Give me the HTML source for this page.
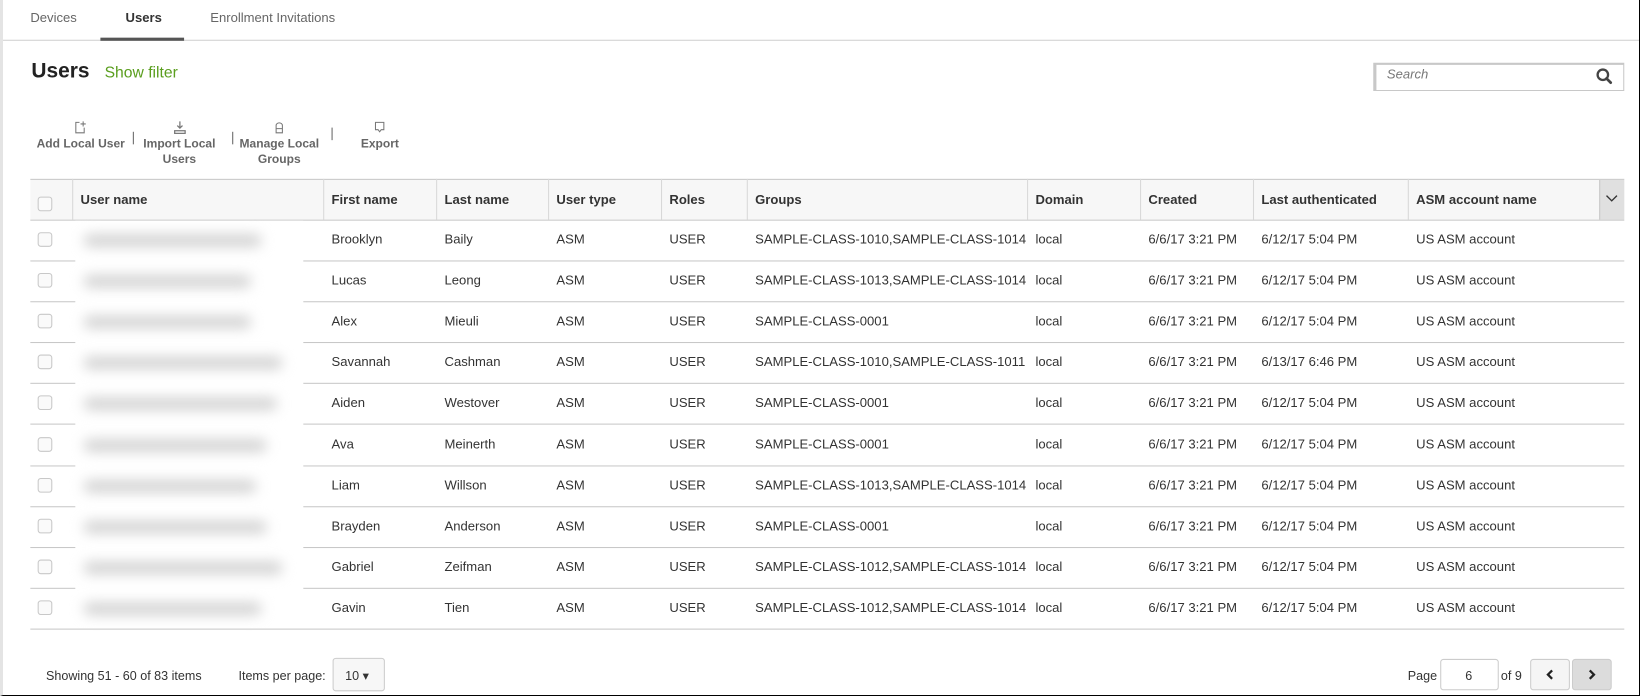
<!DOCTYPE html>
<html><head><meta charset="utf-8"><style>
*{box-sizing:border-box;margin:0;padding:0}
body{width:1640px;height:696px;background:#fff;font-family:"Liberation Sans",sans-serif;color:#333;position:relative;overflow:hidden;font-size:12px}
#w{position:absolute;left:0;top:0;width:1568px;height:666px;transform:scale(1.0459);transform-origin:0 0}
.a{position:absolute;white-space:nowrap}
.frame{position:absolute;left:0;top:0;width:1640px;height:696px;border:1px solid #000;border-left:3px solid #e4e4e4;border-top:none;pointer-events:none}
.tab{top:10px;font-size:12.5px;color:#666}
.tb{font-size:11.5px;font-weight:bold;color:#666;text-align:center;line-height:15px}
.sep{width:1px;height:12px;background:#666}
.hl{position:absolute;left:29px;width:1524px;height:1px;background:#c8c8c8}
.cb{position:absolute;left:36px;width:14px;height:14px;border:1px solid #c8c8c8;border-radius:3px;background:#fafafa}
.th{font-weight:bold;font-size:12.5px;color:#333;top:184px}
.vl{position:absolute;top:171px;width:1px;height:39px;background:#d8d8d8}
.cell{font-size:12.5px;color:#333}
.blur{position:absolute;left:80px;height:12px;background:#d2d2d2;filter:blur(6px);border-radius:6px}
</style></head><body>
<div id="w">
<div class="a tab" style="left:29px">Devices</div>
<div class="a tab" style="left:120px;color:#333;font-weight:bold">Users</div>
<div class="a tab" style="left:201px">Enrollment Invitations</div>
<div style="position:absolute;left:0;top:38px;width:1568px;height:1px;background:#d0d0d0"></div>
<div style="position:absolute;left:96px;top:36px;width:80px;height:3px;background:#555"></div>

<div class="a" style="left:30px;top:57px;font-size:20px;font-weight:bold;color:#222">Users</div>
<div class="a" style="left:100px;top:61px;font-size:15px;color:#5a9e1e">Show filter</div>

<div style="position:absolute;left:1313px;top:60px;width:240px;height:27px;border:1px solid #c8c8c8;border-left-width:3px;border-top-width:2px"></div>
<div class="a" style="left:1326px;top:64px;font-size:12.5px;font-style:italic;color:#777">Search</div>
<svg class="a" style="left:1525px;top:64px" width="18" height="18" viewBox="0 0 18 18"><circle cx="7.5" cy="7.5" r="5" fill="none" stroke="#444" stroke-width="2.2"/><line x1="11" y1="11" x2="15" y2="15" stroke="#444" stroke-width="2.6" stroke-linecap="round"/></svg>

<svg class="a" style="left:70px;top:115px" width="14" height="14" viewBox="0 0 14 14" fill="none" stroke="#777" stroke-width="1"><path d="M6 2H2.5v10h8V7"/><path d="M9.5 1v5M7 3.5h5"/></svg>
<svg class="a" style="left:165px;top:115px" width="14" height="14" viewBox="0 0 14 14" fill="none" stroke="#777" stroke-width="1.2"><path d="M7 1v6M4.5 5L7 7.5 9.5 5"/><rect x="2" y="10" width="10" height="2.5"/></svg>
<svg class="a" style="left:260px;top:115px" width="14" height="14" viewBox="0 0 14 14" fill="none" stroke="#777" stroke-width="1"><path d="M4 12V5a3 2.5 0 0 1 6 0v7zM4 8h6"/></svg>
<svg class="a" style="left:356px;top:115px" width="14" height="14" viewBox="0 0 14 14" fill="none" stroke="#777" stroke-width="1"><path d="M3 9V2h8v7H8.5l-1.5 2-1.5-2z"/></svg>
<div class="a tb" style="left:35px;top:131px">Add Local User</div>
<div class="a sep" style="left:127px;top:126px"></div>
<div class="a tb" style="left:137px;top:131px">Import Local<br>Users</div>
<div class="a sep" style="left:222px;top:126px"></div>
<div class="a tb" style="left:229px;top:131px">Manage Local<br>Groups</div>
<div class="a sep" style="left:317px;top:122px"></div>
<div class="a tb" style="left:345px;top:131px">Export</div>

<div style="position:absolute;left:29px;top:171px;width:1524px;height:39px;background:#f7f7f7;border-top:1px solid #c8c8c8"></div>
<div class="vl" style="left:69px"></div><div class="vl" style="left:309px"></div><div class="vl" style="left:417px"></div><div class="vl" style="left:524px"></div><div class="vl" style="left:632px"></div><div class="vl" style="left:714px"></div><div class="vl" style="left:982px"></div><div class="vl" style="left:1090px"></div><div class="vl" style="left:1198px"></div><div class="vl" style="left:1346px"></div>
<div style="position:absolute;left:1529px;top:172px;width:24px;height:38px;background:#e0e0e0;border-left:1px solid #c8c8c8"></div>
<svg class="a" style="left:1535px;top:186px" width="12" height="8" viewBox="0 0 12 8"><path d="M1 1l5 5 5-5" fill="none" stroke="#333" stroke-width="1.3"/></svg>
<div class="cb" style="top:188px"></div>
<div class="a th" style="left:77px">User name</div>
<div class="a th" style="left:317px">First name</div>
<div class="a th" style="left:425px">Last name</div>
<div class="a th" style="left:532px">User type</div>
<div class="a th" style="left:640px">Roles</div>
<div class="a th" style="left:722px">Groups</div>
<div class="a th" style="left:990px">Domain</div>
<div class="a th" style="left:1098px">Created</div>
<div class="a th" style="left:1206px">Last authenticated</div>
<div class="a th" style="left:1354px">ASM account name</div>
<div class="hl" style="top:210px"></div>

<div id="rows"></div>

<div class="a cell" style="left:44px;top:639px;font-size:12px">Showing 51 - 60 of 83 items</div>
<div class="a cell" style="left:228px;top:639px;font-size:12px">Items per page:</div>
<div style="position:absolute;left:318px;top:629px;width:50px;height:32px;border:1px solid #ccc;border-radius:3px;background:#f7f7f7"></div>
<div class="a cell" style="left:330px;top:639px;font-size:12px">10 ▾</div>
<div class="a cell" style="left:1346px;top:639px;font-size:12px">Page</div>
<div style="position:absolute;left:1377px;top:630px;width:56px;height:30px;border:1px solid #ccc;border-radius:3px"></div>
<div class="a cell" style="left:1401px;top:639px;font-size:12px">6</div>
<div class="a cell" style="left:1435px;top:639px;font-size:12px">of 9</div>
<div style="position:absolute;left:1463px;top:630px;width:38px;height:30px;border:1px solid #ccc;border-radius:3px;background:#f5f5f5"></div>
<div style="position:absolute;left:1503px;top:630px;width:38px;height:30px;border:1px solid #ccc;border-radius:3px;background:#dcdcdc"></div>
<svg class="a" style="left:1477px;top:639px" width="10" height="12" viewBox="0 0 10 12"><path d="M7 2L3 6l4 4" fill="none" stroke="#222" stroke-width="2.2"/></svg>
<svg class="a" style="left:1517px;top:639px" width="10" height="12" viewBox="0 0 10 12"><path d="M3 2l4 4-4 4" fill="none" stroke="#222" stroke-width="2.2"/></svg>
</div>
<script>
var d=[["Brooklyn","Baily","SAMPLE-CLASS-1010,SAMPLE-CLASS-1014","6/12/17 5:04 PM",170],
["Lucas","Leong","SAMPLE-CLASS-1013,SAMPLE-CLASS-1014","6/12/17 5:04 PM",160],
["Alex","Mieuli","SAMPLE-CLASS-0001","6/12/17 5:04 PM",160],
["Savannah","Cashman","SAMPLE-CLASS-1010,SAMPLE-CLASS-1011","6/13/17 6:46 PM",190],
["Aiden","Westover","SAMPLE-CLASS-0001","6/12/17 5:04 PM",185],
["Ava","Meinerth","SAMPLE-CLASS-0001","6/12/17 5:04 PM",175],
["Liam","Willson","SAMPLE-CLASS-1013,SAMPLE-CLASS-1014","6/12/17 5:04 PM",165],
["Brayden","Anderson","SAMPLE-CLASS-0001","6/12/17 5:04 PM",175],
["Gabriel","Zeifman","SAMPLE-CLASS-1012,SAMPLE-CLASS-1014","6/12/17 5:04 PM",190],
["Gavin","Tien","SAMPLE-CLASS-1012,SAMPLE-CLASS-1014","6/12/17 5:04 PM",170]];
var h="";
d.forEach(function(r,i){var y=210+i*39.1;var t=y+12;
h+='<div class="hl" style="top:'+(y+39)+'px"></div>';
h+='<div class="cb" style="top:'+(y+12)+'px"></div>';
h+='<div class="a cell" style="left:317px;top:'+t+'px">'+r[0]+'</div>';
h+='<div class="a cell" style="left:425px;top:'+t+'px">'+r[1]+'</div>';
h+='<div class="a cell" style="left:532px;top:'+t+'px">ASM</div>';
h+='<div class="a cell" style="left:640px;top:'+t+'px">USER</div>';
h+='<div class="a cell" style="left:722px;top:'+t+'px">'+r[2]+'</div>';
h+='<div class="a cell" style="left:990px;top:'+t+'px">local</div>';
h+='<div class="a cell" style="left:1098px;top:'+t+'px">6/6/17 3:21 PM</div>';
h+='<div class="a cell" style="left:1206px;top:'+t+'px">'+r[3]+'</div>';
h+='<div class="a cell" style="left:1354px;top:'+t+'px">US ASM account</div>';
});
h+='<div style="position:absolute;left:72px;top:211px;width:218px;height:382px;background:#fff"></div>';
d.forEach(function(r,i){var y=210+i*39.1;h+='<div class="blur" style="top:'+(y+14)+'px;width:'+r[4]+'px"></div>';});
document.getElementById("rows").innerHTML=h;
</script>
<div class="frame"></div>
</body></html>
